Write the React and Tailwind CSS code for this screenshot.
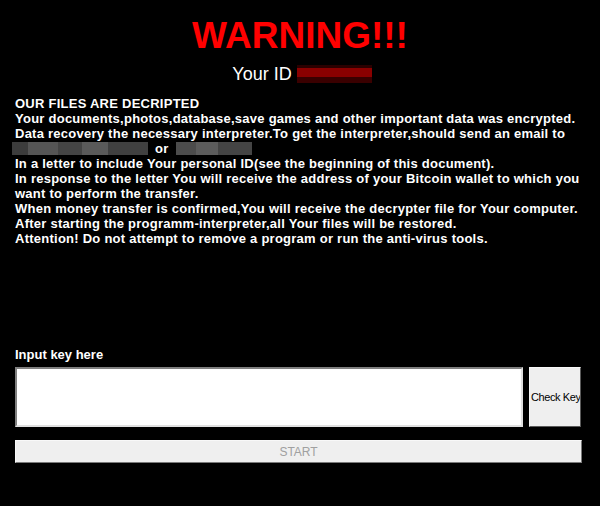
export default function App() {
  const lines = [
    "OUR FILES ARE DECRIPTED",
    "Your documents,photos,database,save games and other important data was encrypted.",
    "Data recovery the necessary interpreter.To get the interpreter,should send an email to",
  ];
  const rest = [
    "In a letter to include Your personal ID(see the beginning of this document).",
    "In response to the letter You will receive the address of your Bitcoin wallet to which you",
    "want to perform the transfer.",
    "When money transfer is confirmed,You will receive the decrypter file for Your computer.",
    "After starting the programm-interpreter,all Your files will be restored.",
    "Attention! Do not attempt to remove a program or run the anti-virus tools.",
  ];

  return (
    <div className="h-[506px] w-[600px] overflow-hidden bg-black font-['Liberation_Sans',Arial,sans-serif] text-white">
      <div className="flex flex-col items-center pt-[13px]">
        <h1 className="text-[37px] font-bold leading-[46px] text-[#ff0000]">
          WARNING!!!
        </h1>
        <div className="mt-[5px] flex items-center gap-[5px] pl-[4px]">
          <span className="text-[18px] leading-[20px]">Your ID</span>
          <div className="flex h-[18px] w-[75px] flex-col">
            <div className="h-[3px] bg-[#2a0000]" />
            <div className="h-[9px] bg-[#8a0000]" />
            <div className="h-[6px] bg-[#3a0000]" />
          </div>
        </div>
      </div>

      <div className="mt-[12px] px-[15px] text-[13px] font-bold leading-[15px] tracking-[0.25px] whitespace-nowrap">
        {lines.map((l) => (
          <div key={l}>{l}</div>
        ))}
        <div className="-ml-[3px] flex h-[15px] items-center gap-[7px]">
          <div className="flex h-[13px] w-[136px]">
            <div className="w-[16px] bg-[#3c3c3c]" />
            <div className="w-[30px] bg-[#555555]" />
            <div className="w-[24px] bg-[#444444]" />
            <div className="w-[26px] bg-[#5a5a5a]" />
            <div className="w-[40px] bg-[#404040]" />
          </div>
          <span>or</span>
          <div className="flex h-[13px] w-[76px]">
            <div className="w-[20px] bg-[#4c4c4c]" />
            <div className="w-[22px] bg-[#5c5c5c]" />
            <div className="w-[34px] bg-[#444444]" />
          </div>
        </div>
        {rest.map((l) => (
          <div key={l}>{l}</div>
        ))}
      </div>

      <div className="mt-[101px] px-[15px]">
        <div className="text-[13px] font-bold leading-[15px]">Input key here</div>
        <div className="mt-[5px] flex gap-[6px]">
          <textarea className="h-[60px] w-[508px] resize-none border-2 border-t-[#808080] border-l-[#808080] border-r-[#e0e0e0] border-b-[#e0e0e0] bg-white" />
          <button className="h-[60px] w-[52px] overflow-hidden whitespace-nowrap border border-t-[#f8f8f8] border-l-[#f8f8f8] border-r-[#5a5a5a] border-b-[#5a5a5a] bg-[#efefef] pl-[1px] text-left text-[11px] tracking-[-0.4px] text-black">
            Check Key
          </button>
        </div>
        <button className="mt-[13px] h-[23px] w-[567px] border border-t-[#f8f8f8] border-l-[#f8f8f8] border-r-[#7a7a7a] border-b-[#7a7a7a] bg-[#efefef] text-[12px] text-[#a0a0a0]">
          START
        </button>
      </div>
    </div>
  );
}
